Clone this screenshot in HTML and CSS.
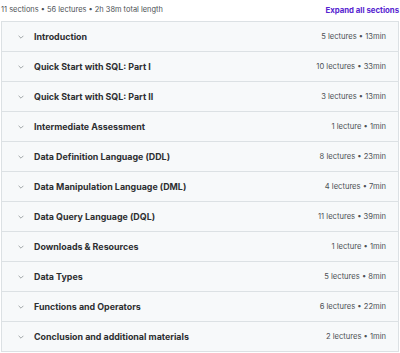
FILE: index.html
```html
<!DOCTYPE html>
<html lang="en">
<head>
    <meta charset="UTF-8">
    <meta name="viewport" content="width=device-width, initial-scale=1.0">
    <title>Course content</title>
    <link rel="stylesheet" href="styles.css">
</head>
<body>
    <div class="curriculum">
        <div class="summary">
            <span class="summary-text">11 sections • 56 lectures • 2h 38m total length</span>
            <button class="expand-all">Expand all sections</button>
        </div>

        <div class="sections">
            <div class="section">
                <svg class="chevron" viewBox="0 0 10 6"><path d="M1 1l4 4 4-4"/></svg>
                <span class="section-title">Introduction</span>
                <span class="section-meta">5 lectures • 13min</span>
            </div>
            <div class="section">
                <svg class="chevron" viewBox="0 0 10 6"><path d="M1 1l4 4 4-4"/></svg>
                <span class="section-title">Quick Start with SQL: Part I</span>
                <span class="section-meta">10 lectures • 33min</span>
            </div>
            <div class="section">
                <svg class="chevron" viewBox="0 0 10 6"><path d="M1 1l4 4 4-4"/></svg>
                <span class="section-title">Quick Start with SQL: Part II</span>
                <span class="section-meta">3 lectures • 13min</span>
            </div>
            <div class="section">
                <svg class="chevron" viewBox="0 0 10 6"><path d="M1 1l4 4 4-4"/></svg>
                <span class="section-title">Intermediate Assessment</span>
                <span class="section-meta">1 lecture • 1min</span>
            </div>
            <div class="section">
                <svg class="chevron" viewBox="0 0 10 6"><path d="M1 1l4 4 4-4"/></svg>
                <span class="section-title">Data Definition Language (DDL)</span>
                <span class="section-meta">8 lectures • 23min</span>
            </div>
            <div class="section">
                <svg class="chevron" viewBox="0 0 10 6"><path d="M1 1l4 4 4-4"/></svg>
                <span class="section-title">Data Manipulation Language (DML)</span>
                <span class="section-meta">4 lectures • 7min</span>
            </div>
            <div class="section">
                <svg class="chevron" viewBox="0 0 10 6"><path d="M1 1l4 4 4-4"/></svg>
                <span class="section-title">Data Query Language (DQL)</span>
                <span class="section-meta">11 lectures • 39min</span>
            </div>
            <div class="section">
                <svg class="chevron" viewBox="0 0 10 6"><path d="M1 1l4 4 4-4"/></svg>
                <span class="section-title">Downloads &amp; Resources</span>
                <span class="section-meta">1 lecture • 1min</span>
            </div>
            <div class="section">
                <svg class="chevron" viewBox="0 0 10 6"><path d="M1 1l4 4 4-4"/></svg>
                <span class="section-title">Data Types</span>
                <span class="section-meta">5 lectures • 8min</span>
            </div>
            <div class="section">
                <svg class="chevron" viewBox="0 0 10 6"><path d="M1 1l4 4 4-4"/></svg>
                <span class="section-title">Functions and Operators</span>
                <span class="section-meta">6 lectures • 22min</span>
            </div>
            <div class="section">
                <svg class="chevron" viewBox="0 0 10 6"><path d="M1 1l4 4 4-4"/></svg>
                <span class="section-title">Conclusion and additional materials</span>
                <span class="section-meta">2 lectures • 1min</span>
            </div>
        </div>
    </div>
</body>
</html>
```

FILE: styles.css
```css
:root {
    --text-primary: #2d2f31;
    --text-secondary: #4d5155;
    --border-color: #dce1e4;
    --section-bg: #f7f9fa;
    --accent: #5624d0;
}

* {
    margin: 0;
    padding: 0;
    box-sizing: border-box;
}

body {
    width: 400px;
    background: #fff;
    font-family: Inter, 'Liberation Sans', Arial, sans-serif;
    color: var(--text-primary);
}

.curriculum {
    padding: 0 1px 0 1px;
}

.summary {
    height: 21px;
    display: flex;
    align-items: center;
    justify-content: space-between;
    padding-bottom: 2px;
}

.summary-text {
    font-size: 7.45px;
    color: var(--text-secondary);
}

.expand-all {
    border: none;
    background: none;
    font-family: inherit;
    font-size: 7.8px;
    font-weight: 700;
    color: var(--accent);
    cursor: pointer;
}

.sections {
    border: 1px solid var(--border-color);
}

.section {
    height: 30px;
    display: flex;
    align-items: center;
    background: var(--section-bg);
    border-bottom: 1px solid var(--border-color);
    padding: 0 12px 0 16px;
}

.section:last-child {
    height: 29px;
    border-bottom: none;
}

.chevron {
    width: 6px;
    height: 4px;
    fill: none;
    stroke: #8a8f93;
    stroke-width: 1.3;
    margin-right: 10px;
}

.section-title {
    flex: 1;
    font-size: 8.9px;
    font-weight: 700;
}

.section-meta {
    font-size: 7.6px;
    color: var(--text-secondary);
}
```
